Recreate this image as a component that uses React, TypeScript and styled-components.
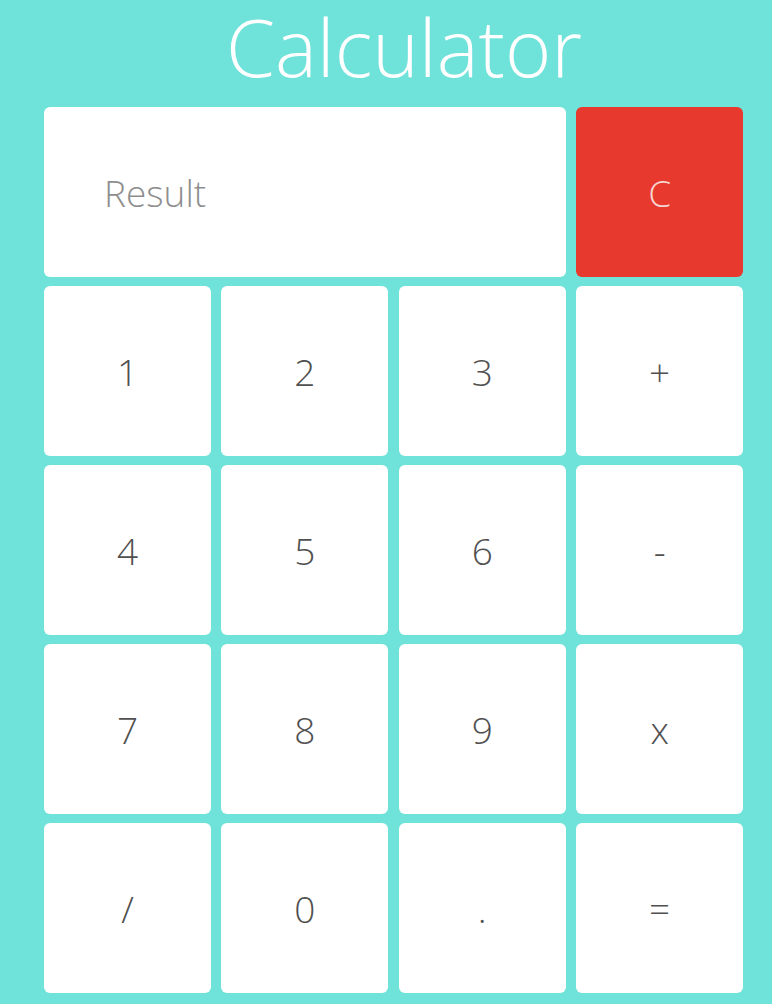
import React from 'react';
import styled, { createGlobalStyle } from 'styled-components';

const GlobalStyle = createGlobalStyle`
  html, body {
    margin: 0;
    padding: 0;
    background: #6fe3da;
  }
  body {
    font-family: 'Open Sans', 'Noto Sans', sans-serif;
  }
`;

const S = {
  Page: styled.div`
    width: 772px;
    height: 1004px;
    overflow: hidden;
    background: #6fe3da;
    padding-left: 44px;
    box-sizing: border-box;
  `,
  Title: styled.h1`
    margin: 0 0 14px 8px;
    width: 704px;
    text-align: center;
    font-size: 79px;
    font-weight: 300;
    line-height: 93px;
    color: #ffffff;
  `,
  Grid: styled.div`
    display: grid;
    grid-template-columns: repeat(4, 167px);
    grid-auto-rows: 170px;
    column-gap: 10.4px;
    row-gap: 9px;
  `,
  Display: styled.div`
    grid-column: span 3;
    display: flex;
    align-items: center;
    padding-left: 60px;
    background: #ffffff;
    border-radius: 6px;
    font-size: 37px;
    font-weight: 300;
    color: #8e8e8e;
  `,
  Key: styled.button<{ $danger?: boolean }>`
    display: flex;
    align-items: center;
    justify-content: center;
    border: none;
    border-radius: 6px;
    padding: 0;
    font-family: 'Open Sans', 'Noto Sans', sans-serif;
    font-size: 37px;
    font-weight: 300;
    background: ${(p) => (p.$danger ? '#e8392f' : '#ffffff')};
    color: ${(p) => (p.$danger ? '#f6d6d2' : '#505050')};
    cursor: pointer;
  `,
};

const keys = ['1', '2', '3', '+', '4', '5', '6', '-', '7', '8', '9', 'x', '/', '0', '.', '='];

const App = () => {
  return (
    <S.Page>
      <GlobalStyle />
      <S.Title>Calculator</S.Title>
      <S.Grid>
        <S.Display>Result</S.Display>
        <S.Key $danger>C</S.Key>
        {keys.map((k) => (
          <S.Key key={k}>{k}</S.Key>
        ))}
      </S.Grid>
    </S.Page>
  );
};

export default App;
